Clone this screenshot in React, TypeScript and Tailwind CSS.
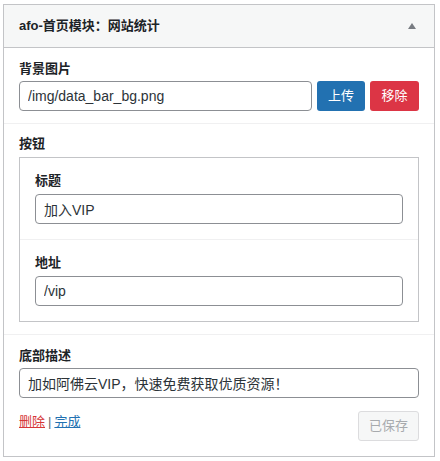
import React from 'react';

const font = { fontFamily: '"Liberation Sans", "Noto Sans CJK SC", sans-serif' };

function Field({ label, value, gap }: { label: string; value: string; gap: 'sm' | 'md' }) {
    return (
        <div>
            <div className="text-[13px] leading-[18px] font-semibold text-[#1d2327]">{label}</div>
            <input
                readOnly
                value={value}
                className={
                    (gap === 'md' ? 'mt-[4px] ' : 'mt-[3px] ') +
                    'w-full h-[30px] px-[8px] text-[14px] text-[#2c3338] border border-[#8c8f94] rounded-[4px] bg-white outline-none'
                }
            />
        </div>
    );
}

export default function App() {
    return (
        <div className="bg-white w-[440px] h-[461px] pt-[4px] pl-[3px]" style={font}>
            <div className="w-[432px] border border-[#c3c4c7] bg-white">
                {/* header */}
                <div className="h-[43px] bg-[#f6f7f7] border-b border-[#c3c4c7] flex items-center justify-between pl-[15px] pr-[18px]">
                    <span className="text-[13px] font-semibold text-[#1d2327]">afo-首页模块：网站统计</span>
                    <svg width="8" height="6" viewBox="0 0 8 6">
                        <path d="M4 0 L8 6 L0 6 Z" fill="#787c82" />
                    </svg>
                </div>

                {/* 背景图片 */}
                <div className="px-[15px] pt-[12px] pb-[12px] border-b border-[#f0f0f1]">
                    <div className="text-[13px] leading-[18px] font-semibold text-[#1d2327]">背景图片</div>
                    <div className="mt-[3px] flex gap-[5px]">
                        <input
                            readOnly
                            value="/img/data_bar_bg.png"
                            className="flex-1 min-w-0 h-[30px] px-[8px] text-[14px] text-[#2c3338] border border-[#8c8f94] rounded-[4px] outline-none"
                        />
                        <button className="w-[48px] h-[30px] rounded-[3px] bg-[#2271b1] text-white text-[13px]">上传</button>
                        <button className="w-[49px] h-[30px] rounded-[3px] bg-[#dc3545] text-white text-[13px]">移除</button>
                    </div>
                </div>

                {/* 按钮 */}
                <div className="px-[15px] pt-[11px] pb-[12px] border-b border-[#f0f0f1]">
                    <div className="text-[13px] leading-[18px] font-semibold text-[#1d2327]">按钮</div>
                    <div className="mt-[4px] border border-[#c3c4c7]">
                        <div className="px-[15px] pt-[14px] pb-[15px] border-b border-[#f0f0f1]">
                            <Field label="标题" value="加入VIP" gap="md" />
                        </div>
                        <div className="px-[15px] pt-[14px] pb-[15px]">
                            <Field label="地址" value="/vip" gap="md" />
                        </div>
                    </div>
                </div>

                {/* 底部描述 */}
                <div className="px-[15px] pt-[12px] pb-[15px]">
                    <Field label="底部描述" value="加如阿佛云VIP，快速免费获取优质资源！" gap="sm" />
                    <div className="mt-[13px] flex items-start justify-between">
                        <div className="text-[13px] leading-[18px] mt-[2px]">
                            <a href="#" className="text-[#d63638] underline">删除</a>
                            <span className="text-[#646970] mx-[3px]">|</span>
                            <a href="#" className="text-[#2271b1] underline">完成</a>
                        </div>
                        <button className="w-[61px] h-[30px] rounded-[3px] bg-[#f6f7f7] border border-[#dcdcde] text-[#a7aaad] text-[13px]">已保存</button>
                    </div>
                </div>
            </div>
        </div>
    );
}
